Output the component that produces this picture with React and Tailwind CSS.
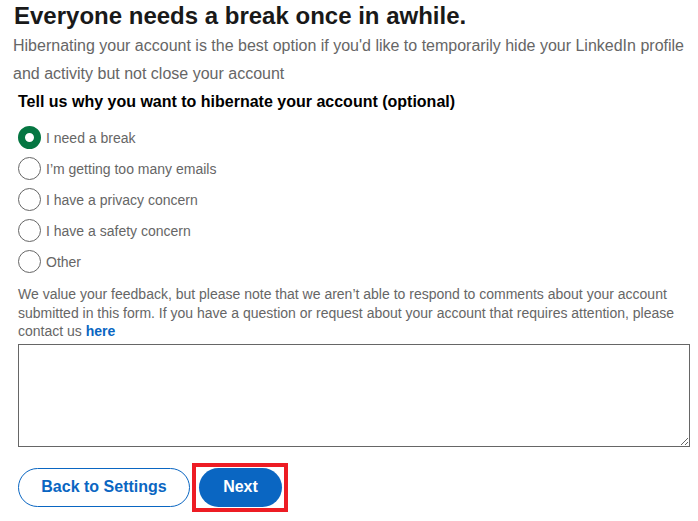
import React from "react";

const options = [
  "I need a break",
  "I’m getting too many emails",
  "I have a privacy concern",
  "I have a safety concern",
  "Other",
];

export default function App() {
  return (
    <div className="w-[698px] h-[521px] bg-white overflow-hidden px-[13px] font-['Liberation_Sans',Arial,sans-serif]">
      <h1 className="pl-px text-[24px] leading-[32px] font-bold text-[#191919]">
        Everyone needs a break once in awhile.
      </h1>
      <p className="text-base leading-[28px] text-[#666666]">
        Hibernating your account is the best option if you'd like to temporarily hide your LinkedIn profile and activity but not close your account
      </p>
      <div className="pl-[5px]">
        <h2 className="mt-[2px] text-base leading-6 font-bold text-black">
          Tell us why you want to hibernate your account (optional)
        </h2>
        <div className="mt-[8px] flex flex-col">
          {options.map((o, i) => (
            <label key={o} className="h-[31px] flex items-center gap-[5px]">
              {i === 0 ? (
                <span className="w-[23px] h-[23px] rounded-full border-[7px] border-[#057642] bg-white shrink-0" />
              ) : (
                <span className="w-[23px] h-[23px] rounded-full border-[1.5px] border-[#666666] bg-white shrink-0" />
              )}
              <span className="text-sm text-[#666666]">{o}</span>
            </label>
          ))}
        </div>
        <p className="mt-[8px] text-sm leading-[18.5px] text-[#666666]">
          We value your feedback, but please note that we aren’t able to respond to comments about your account submitted in this form. If you have a question or request about your account that requires attention, please contact us <b className="font-bold text-[#0a66c2]">here</b>
        </p>
        <textarea className="mt-[3px] block w-[672px] h-[103px] border border-[#666666] outline-none resize" />
        <div className="mt-[21px] flex items-center gap-[9px]">
          <button className="w-[172px] h-[39px] rounded-full border border-[#0a66c2] text-[#0a66c2] text-base font-bold">
            Back to Settings
          </button>
          <div className="relative">
            <button className="w-[83px] h-[39px] rounded-full bg-[#0a66c2] text-white text-base font-bold block">
              Next
            </button>
            <div className="absolute -left-[7px] -top-[5px] -right-[6px] -bottom-[5px] border-4 border-[#ed1c24]" />
          </div>
        </div>
      </div>
    </div>
  );
}
